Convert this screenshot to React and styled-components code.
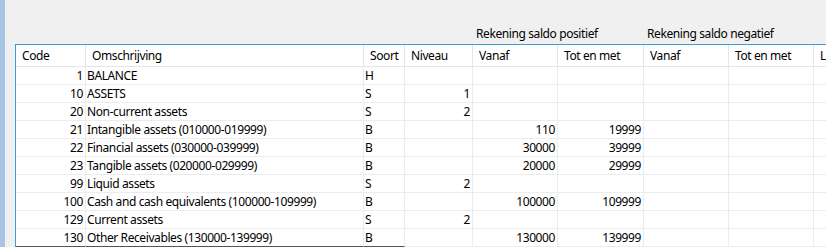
import styled, { createGlobalStyle } from 'styled-components'

const COLS = '70px 278px 41px 68px 85px 86px 85px 85px 100px'

const columns = [
  { key: 'code', label: 'Code', align: 'right' },
  { key: 'name', label: 'Omschrijving', align: 'left' },
  { key: 'type', label: 'Soort', align: 'left' },
  { key: 'level', label: 'Niveau', align: 'right' },
  { key: 'posFrom', label: 'Vanaf', align: 'right' },
  { key: 'posTo', label: 'Tot en met', align: 'right' },
  { key: 'negFrom', label: 'Vanaf', align: 'right' },
  { key: 'negTo', label: 'Tot en met', align: 'right' },
  { key: 'extra', label: 'L', align: 'left' },
]

const rows = [
  { code: 1, name: 'BALANCE', type: 'H' },
  { code: 10, name: 'ASSETS', type: 'S', level: 1 },
  { code: 20, name: 'Non-current assets', type: 'S', level: 2 },
  { code: 21, name: 'Intangible assets (010000-019999)', type: 'B', posFrom: 110, posTo: 19999 },
  { code: 22, name: 'Financial assets (030000-039999)', type: 'B', posFrom: 30000, posTo: 39999 },
  { code: 23, name: 'Tangible assets (020000-029999)', type: 'B', posFrom: 20000, posTo: 29999 },
  { code: 99, name: 'Liquid assets', type: 'S', level: 2 },
  { code: 100, name: 'Cash and cash equivalents (100000-109999)', type: 'B', posFrom: 100000, posTo: 109999 },
  { code: 129, name: 'Current assets', type: 'S', level: 2 },
  { code: 130, name: 'Other Receivables (130000-139999)', type: 'B', posFrom: 130000, posTo: 139999 },
]

function App() {
  return (
    <>
      <GlobalStyle />
      <Window>
        <Strip />
        <Main>
          <GroupRow>
            <GroupLabel $col={5}>Rekening saldo positief</GroupLabel>
            <GroupLabel $col={7}>Rekening saldo negatief</GroupLabel>
          </GroupRow>
          <Grid>
            <HeaderRow>
              {columns.map((c, i) => (
                <HeaderCell key={i}>{c.label}</HeaderCell>
              ))}
            </HeaderRow>
            {rows.map((r, ri) => (
              <Row key={r.code}>
                {columns.map((c, ci) => (
                  <Cell
                    key={c.key}
                    $align={c.align}
                    $edge={ri === rows.length - 1 && ci < 3}
                  >
                    {r[c.key]}
                  </Cell>
                ))}
              </Row>
            ))}
          </Grid>
        </Main>
      </Window>
    </>
  )
}

const GlobalStyle = createGlobalStyle`
  body {
    margin: 0;
    background: #f0f0f0;
    overflow: hidden;
    font-family: "Noto Sans", "Liberation Sans", sans-serif;
    font-size: 12px;
    letter-spacing: -0.4px;
    color: #000;
  }
`

const Window = styled.div`
  display: flex;
  height: 247px;
  overflow: hidden;
`

const Strip = styled.div`
  width: 5px;
  flex-shrink: 0;
  background: #a9c5e6;
`

const Main = styled.div`
  display: flex;
  flex-direction: column;
  padding-left: 10px;
  min-width: 0;
`

const GroupRow = styled.div`
  display: grid;
  grid-template-columns: 1px ${COLS};
  height: 44px;
  flex-shrink: 0;
  align-items: end;
`

const GroupLabel = styled.div`
  grid-column: ${props => props.$col + 1} / span 2;
  padding: 0 0 2px 3px;
  line-height: 16px;
  white-space: nowrap;
`

const Grid = styled.div`
  flex-shrink: 0;
  border-top: 1px solid #3b9ddd;
  border-left: 1px solid #3b9ddd;
  background: #fff;
  width: 900px;
`

const Row = styled.div`
  display: grid;
  grid-template-columns: ${COLS};
  height: 18px;
`

const HeaderRow = styled(Row)`
  height: 22px;
`

const HeaderCell = styled.div`
  border-right: 1px solid #e5e5e5;
  border-bottom: 1px solid #e5e5e5;
  padding-left: 6px;
  display: flex;
  align-items: center;
  white-space: nowrap;
  overflow: hidden;
`

const Cell = styled.div`
  border-right: 1px solid #ececec;
  border-bottom: 1px solid ${props => (props.$edge ? '#555' : '#ececec')};
  display: flex;
  align-items: center;
  justify-content: ${props => (props.$align === 'right' ? 'flex-end' : 'flex-start')};
  padding: ${props => (props.$align === 'right' ? '0 2px 0 0' : '0 0 0 1px')};
  white-space: nowrap;
  overflow: hidden;
`

export default App
